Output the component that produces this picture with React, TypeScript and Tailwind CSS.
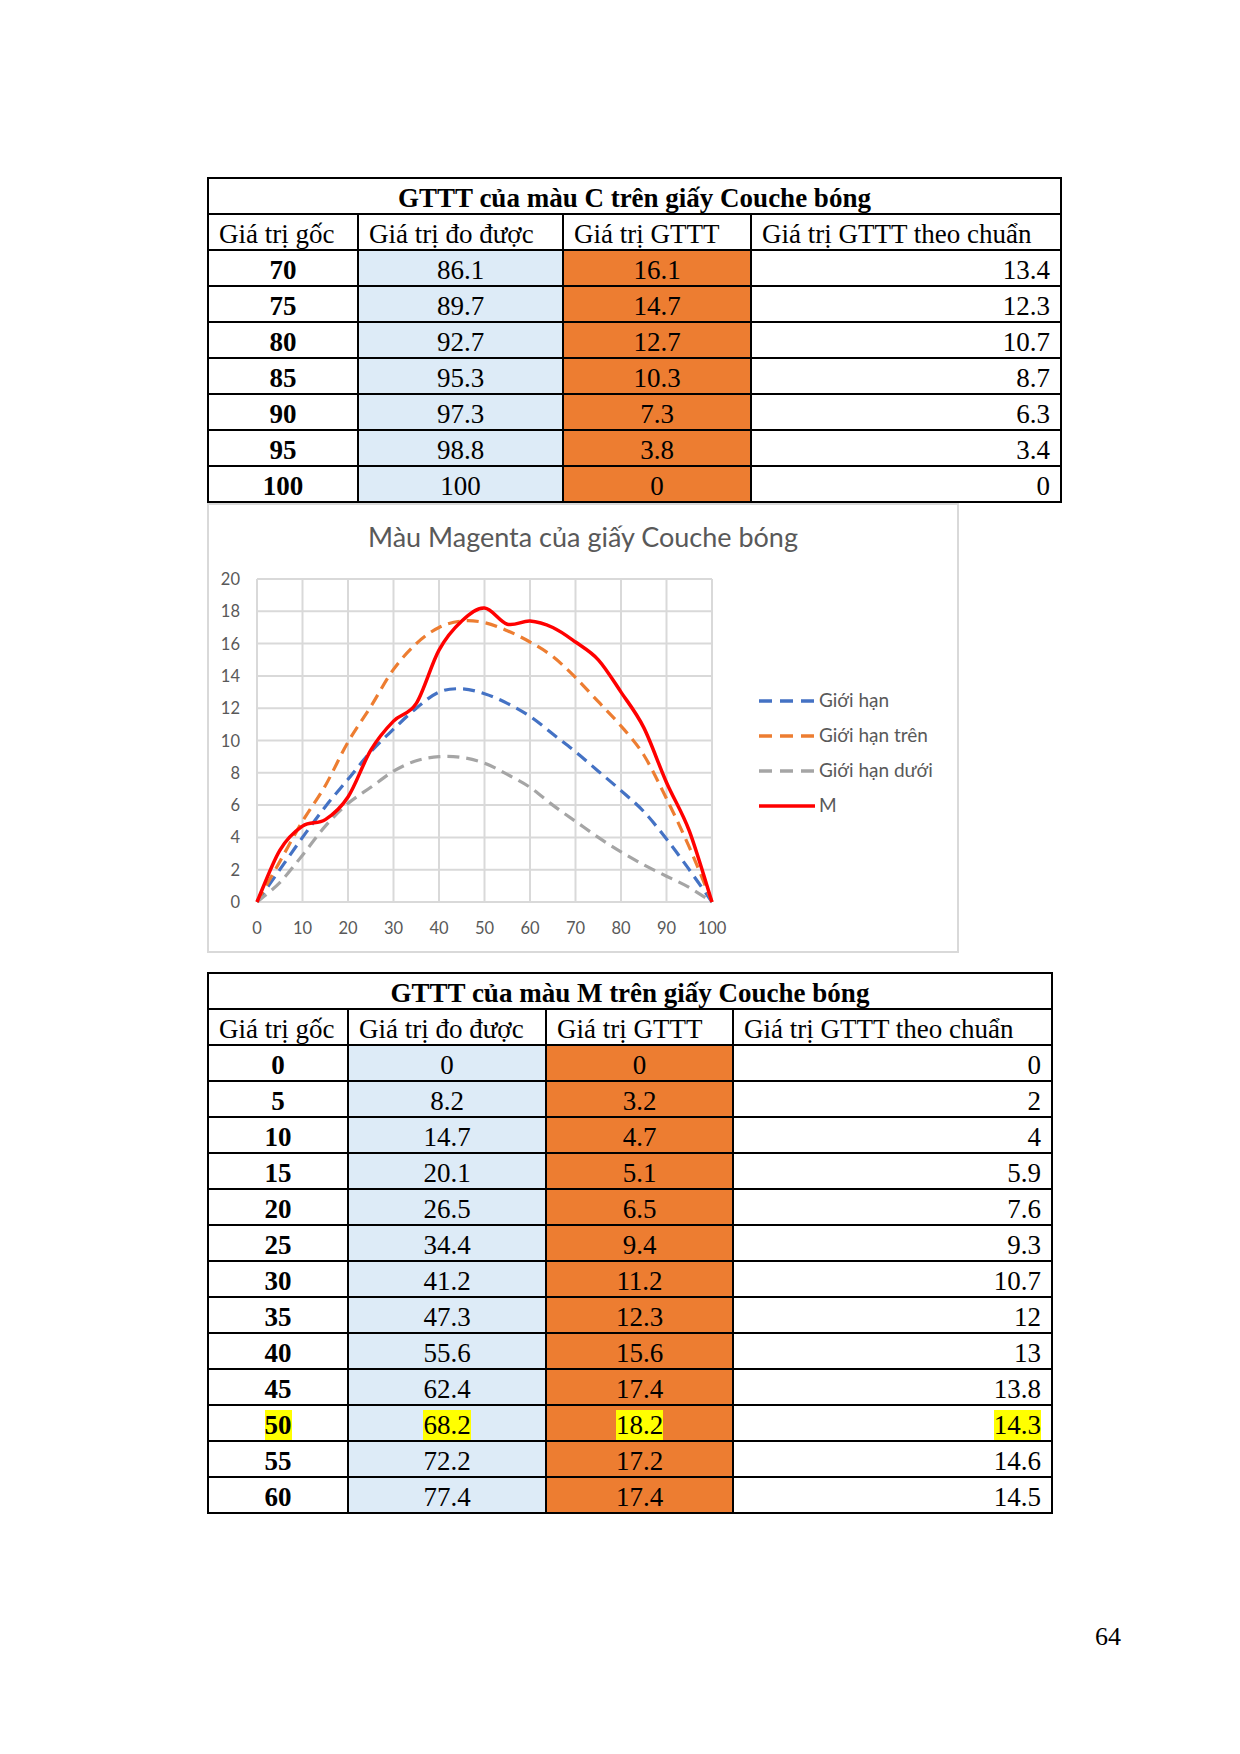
import React from "react";

type Row = [string, string, string, string];

const rowsC: Row[] = [
  ["70", "86.1", "16.1", "13.4"],
  ["75", "89.7", "14.7", "12.3"],
  ["80", "92.7", "12.7", "10.7"],
  ["85", "95.3", "10.3", "8.7"],
  ["90", "97.3", "7.3", "6.3"],
  ["95", "98.8", "3.8", "3.4"],
  ["100", "100", "0", "0"],
];

const rowsM: Row[] = [
  ["0", "0", "0", "0"],
  ["5", "8.2", "3.2", "2"],
  ["10", "14.7", "4.7", "4"],
  ["15", "20.1", "5.1", "5.9"],
  ["20", "26.5", "6.5", "7.6"],
  ["25", "34.4", "9.4", "9.3"],
  ["30", "41.2", "11.2", "10.7"],
  ["35", "47.3", "12.3", "12"],
  ["40", "55.6", "15.6", "13"],
  ["45", "62.4", "17.4", "13.8"],
  ["50", "68.2", "18.2", "14.3"],
  ["55", "72.2", "17.2", "14.6"],
  ["60", "77.4", "17.4", "14.5"],
];

const headers = ["Giá trị gốc", "Giá trị đo được", "Giá trị GTTT", "Giá trị GTTT theo chuẩn"];

function DataTable({
  title,
  rows,
  widths,
  mark,
}: {
  title: string;
  rows: Row[];
  widths: number[];
  mark?: string;
}) {
  const hl = (text: string, on: boolean) =>
    on ? <span className="bg-[#ffff00]">{text}</span> : text;

  return (
    <table className="border-collapse table-fixed font-['Liberation_Serif',serif] text-[27px] leading-none text-black">
      <colgroup>
        {widths.map((w, i) => (
          <col key={i} style={{ width: w }} />
        ))}
      </colgroup>
      <tbody>
        <tr className="h-[36px]">
          <td colSpan={4} className="border-2 border-black text-center font-bold pt-[4px]">
            {title}
          </td>
        </tr>
        <tr className="h-[36px]">
          {headers.map((h) => (
            <td key={h} className="border-2 border-black pl-[10px] pt-[4px] whitespace-nowrap">
              {h}
            </td>
          ))}
        </tr>
        {rows.map((r) => {
          const on = r[0] === mark;
          return (
            <tr key={r[0]} className="h-[36px]">
              <td className="border-2 border-black text-center font-bold pt-[4px]">{hl(r[0], on)}</td>
              <td className="border-2 border-black text-center bg-[#ddebf7] pt-[4px]">{hl(r[1], on)}</td>
              <td className="border-2 border-black text-center bg-[#ed7d31] pt-[4px]">{hl(r[2], on)}</td>
              <td className="border-2 border-black text-right pr-[10px] pt-[4px]">{hl(r[3], on)}</td>
            </tr>
          );
        })}
      </tbody>
    </table>
  );
}

// chart data, read off the plot
const xs = [0, 5, 10, 15, 20, 25, 30, 35, 40, 45, 50, 55, 60, 65, 70, 75, 80, 85, 90, 95, 100];
const series = [
  {
    name: "Giới hạn",
    color: "#4472c4",
    dash: true,
    ys: [0, 2, 4, 5.9, 7.6, 9.3, 10.7, 12, 13, 13.2, 12.9, 12.3, 11.5, 10.4, 9.3, 8.1, 6.9, 5.6, 3.9, 2.0, 0],
  },
  {
    name: "Giới hạn trên",
    color: "#ed7d31",
    dash: true,
    ys: [0, 2.5, 5.0, 7.2, 9.9, 12.1, 14.4, 16.0, 17.0, 17.4, 17.3, 16.8, 16.1, 15.2, 13.9, 12.4, 10.9, 9.1, 6.4, 3.4, 0],
  },
  {
    name: "Giới hạn dưới",
    color: "#a5a5a5",
    dash: true,
    ys: [0, 1.2, 2.9, 4.7, 6.1, 7.1, 8.1, 8.75, 9.0, 8.95, 8.6, 7.9, 7.1, 6.0, 5.0, 4.0, 3.1, 2.3, 1.6, 0.9, 0],
  },
  {
    name: "M",
    color: "#ff0000",
    dash: false,
    ys: [0, 3.2, 4.7, 5.1, 6.5, 9.4, 11.2, 12.3, 15.6, 17.4, 18.2, 17.2, 17.4, 17.0, 16.1, 15.0, 13.0, 10.8, 7.4, 4.4, 0],
  },
];

const X0 = 48;
const SX = 4.55;
const Y0 = 349;
const SY = 16.15;
const px = (x: number) => X0 + x * SX;
const py = (y: number) => Y0 - y * SY;

function smoothPath(ys: number[]) {
  const pts = xs.map((x, i) => [px(x), py(ys[i])]);
  let d = `M${pts[0][0]},${pts[0][1]}`;
  for (let i = 0; i < pts.length - 1; i++) {
    const p0 = pts[i - 1] || pts[i];
    const p1 = pts[i];
    const p2 = pts[i + 1];
    const p3 = pts[i + 2] || p2;
    const c1x = p1[0] + (p2[0] - p0[0]) / 6;
    const c1y = p1[1] + (p2[1] - p0[1]) / 6;
    const c2x = p2[0] - (p3[0] - p1[0]) / 6;
    const c2y = p2[1] - (p3[1] - p1[1]) / 6;
    d += ` C${c1x.toFixed(1)},${c1y.toFixed(1)} ${c2x.toFixed(1)},${c2y.toFixed(1)} ${p2[0].toFixed(1)},${p2[1].toFixed(1)}`;
  }
  return d;
}

function Chart() {
  const gridX = [0, 10, 20, 30, 40, 50, 60, 70, 80, 90, 100];
  const gridY = [0, 2, 4, 6, 8, 10, 12, 14, 16, 18, 20];

  return (
    <div className="w-[752px] h-[450px] border-2 border-[#d9d9d9] bg-white flex flex-col font-['Lato',sans-serif] text-[#595959]">
      <div className="pt-[17px] h-[48px] text-center text-[27px] leading-[30px]">Màu Magenta của giấy Couche bóng</div>
      <div className="flex">
        <svg width="530" height="396" viewBox="0 0 530 396">
          {gridX.map((g) => (
            <line key={"x" + g} x1={px(g)} x2={px(g)} y1={py(20)} y2={py(0)} stroke="#d9d9d9" strokeWidth="2" />
          ))}
          {gridY.map((g) => (
            <line key={"y" + g} x1={px(0)} x2={px(100)} y1={py(g)} y2={py(g)} stroke="#d9d9d9" strokeWidth="2" />
          ))}
          {gridY.map((g) => (
            <text key={"ly" + g} x={31} y={py(g) + 6} textAnchor="end" fontSize="16.5" fill="#595959">
              {g}
            </text>
          ))}
          {gridX.map((g) => (
            <text key={"lx" + g} x={px(g)} y={381} textAnchor="middle" fontSize="16.5" fill="#595959">
              {g}
            </text>
          ))}
          {series.map((s) => (
            <path
              key={s.name}
              d={smoothPath(s.ys)}
              fill="none"
              stroke={s.color}
              strokeWidth={s.dash ? 3.2 : 3.5}
              strokeDasharray={s.dash ? "12 7" : undefined}
              strokeLinejoin="round"
            />
          ))}
        </svg>
        <div className="ml-[20px] pt-[4px] flex flex-col justify-center">
          {series.map((s) => (
            <div key={s.name} className="h-[35px] flex items-center gap-[4px] text-[19px]">
              <svg width="56" height="6">
                <line
                  x1="0"
                  x2="56"
                  y1="3"
                  y2="3"
                  stroke={s.color}
                  strokeWidth="3.5"
                  strokeDasharray={s.dash ? "13 8" : undefined}
                />
              </svg>
              <span>{s.name}</span>
            </div>
          ))}
        </div>
      </div>
    </div>
  );
}

export default function App() {
  return (
    <main className="w-[1240px] h-[1754px] bg-white flex flex-col items-start pt-[177px] pl-[207px]">
      <DataTable title="GTTT của màu C trên giấy Couche bóng" rows={rowsC} widths={[150, 205, 188, 310]} />
      <Chart />
      <div className="mt-[19px]">
        <DataTable title="GTTT của màu M trên giấy Couche bóng" rows={rowsM} widths={[140, 198, 187, 319]} mark="50" />
      </div>
      <div className="self-stretch flex justify-end pr-[119px] mt-[108px] font-['Liberation_Serif',serif] text-[26px] leading-[30px]">
        64
      </div>
    </main>
  );
}
